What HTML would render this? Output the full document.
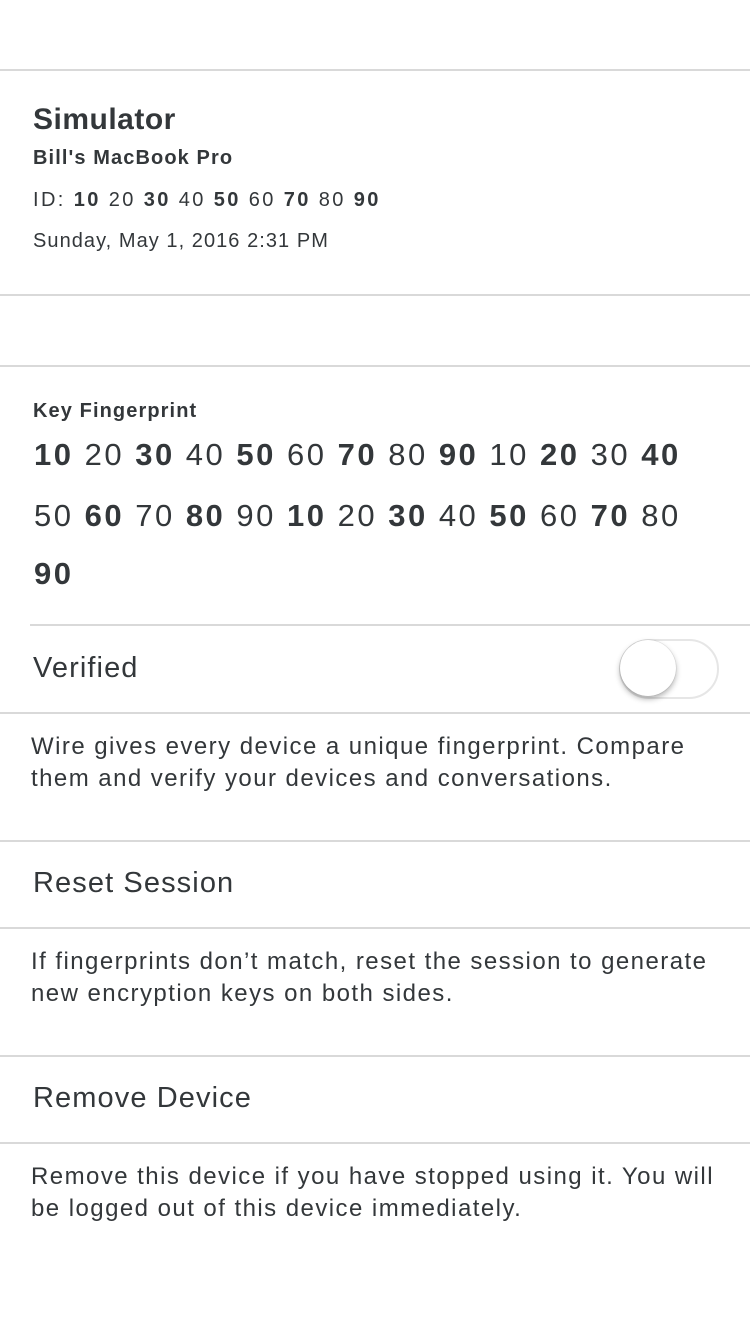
<!DOCTYPE html>
<html><head><meta charset="utf-8"><style>
body{margin:0;width:750px;height:1334px;background:#fff;position:relative;overflow:hidden;font-family:"Liberation Sans",sans-serif;color:#33373a}
.l{position:absolute;height:2px;background:#d9d9d9;right:0;left:0}
.t{position:absolute;white-space:nowrap}
b{font-weight:bold}
.p{font-size:24px;line-height:32px;letter-spacing:1.45px}
.h{font-size:29px;letter-spacing:1.1px}
.fp{font-size:31px;letter-spacing:2.5px}
</style></head><body>
<div class="l" style="top:69px"></div>
<div class="t" style="left:33px;top:103px;font-size:30px;font-weight:bold;letter-spacing:0.5px">Simulator</div>
<div class="t" style="left:33px;top:147px;font-size:20px;font-weight:bold;letter-spacing:1.1px">Bill's MacBook Pro</div>
<div class="t" style="left:33px;top:189px;font-size:20px;letter-spacing:2.4px">ID: <b>10</b> 20 <b>30</b> 40 <b>50</b> 60 <b>70</b> 80 <b>90</b></div>
<div class="t" style="left:33px;top:230px;font-size:20px;letter-spacing:1.05px">Sunday, May 1, 2016 2:31 PM</div>
<div class="l" style="top:294px"></div>
<div class="l" style="top:365px"></div>
<div class="t" style="left:33px;top:400px;font-size:20px;font-weight:bold;letter-spacing:1.1px">Key Fingerprint</div>
<div class="t fp" style="left:34px;top:437px"><b>10</b> 20 <b>30</b> 40 <b>50</b> 60 <b>70</b> 80 <b>90</b> 10 <b>20</b> 30 <b>40</b></div>
<div class="t fp" style="left:34px;top:498px">50 <b>60</b> 70 <b>80</b> 90 <b>10</b> 20 <b>30</b> 40 <b>50</b> 60 <b>70</b> 80</div>
<div class="t fp" style="left:34px;top:556px"><b>90</b></div>
<div class="l" style="top:624px;left:30px"></div>
<div class="t h" style="left:33px;top:652px">Verified</div>
<div style="position:absolute;left:619px;top:639px;width:96px;height:56px;border:2px solid #e6e6e6;border-radius:30px"></div>
<div style="position:absolute;left:620px;top:640px;width:56px;height:56px;border-radius:50%;background:#fff;box-shadow:0 3px 6px rgba(0,0,0,.3),0 0 1px rgba(0,0,0,.3)"></div>
<div class="l" style="top:712px"></div>
<div class="t p" style="left:31px;top:731px">Wire gives every device a unique fingerprint. Compare<br>them and verify your devices and conversations.</div>
<div class="l" style="top:840px"></div>
<div class="t h" style="left:33px;top:867px">Reset Session</div>
<div class="l" style="top:927px"></div>
<div class="t p" style="left:31px;top:946px">If fingerprints don’t match, reset the session to generate<br>new encryption keys on both sides.</div>
<div class="l" style="top:1055px"></div>
<div class="t h" style="left:33px;top:1082px">Remove Device</div>
<div class="l" style="top:1142px"></div>
<div class="t p" style="left:31px;top:1161px">Remove this device if you have stopped using it. You will<br>be logged out of this device immediately.</div>
</body></html>
